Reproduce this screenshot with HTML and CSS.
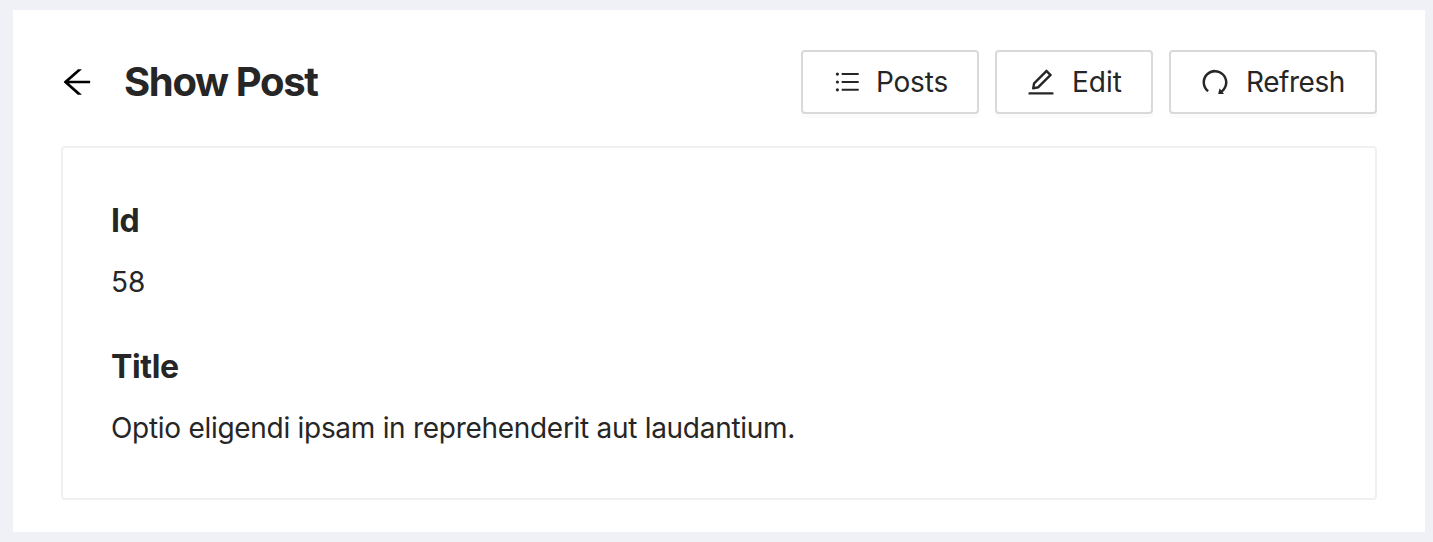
FILE: index.html
```html
<!DOCTYPE html>
<html lang="en">
<head>
<meta charset="utf-8">
<title>Show Post</title>
<link rel="stylesheet" href="styles.css">
</head>
<body>
<main class="page">
  <header class="page-header">
    <a class="back" aria-label="Back"><svg viewBox="64 64 896 896"><path d="M872 474H286.9l350.2-304c5.6-4.9 2.2-14-5.2-14h-88.5c-3.9 0-7.6 1.4-10.5 3.9L155 487.8a31.96 31.96 0 000 48.3L535.1 866c1.5 1.3 3.3 2 5.2 2h91.5c7.4 0 10.8-9.2 5.2-14L286.9 550H872c4.4 0 8-3.6 8-8v-60c0-4.4-3.6-8-8-8z"/></svg></a>
    <h1 class="page-title">Show Post</h1>
    <div class="actions">
      <button class="btn btn-posts"><svg viewBox="0 0 28 28"><path d="M8.7 5h17v2.1h-17zM8.7 12.9h17V15h-17zM8.7 20.7h17v2.1h-17z"/><circle cx="4.4" cy="6.1" r="1.6"/><circle cx="4.4" cy="14" r="1.6"/><circle cx="4.4" cy="21.8" r="1.6"/></svg><span>Posts</span></button>
      <button class="btn btn-edit"><svg viewBox="64 64 896 896"><path d="M257.7 752c2 0 4-.2 6-.5L431.9 722c2-.4 3.9-1.3 5.3-2.8l423.9-423.9a9.96 9.96 0 000-14.1L694.9 114.9c-1.9-1.9-4.4-2.9-7.1-2.9s-5.2 1-7.1 2.9L256.8 538.8c-1.5 1.5-2.4 3.3-2.8 5.3l-29.5 168.2a33.5 33.5 0 009.4 29.8c6.6 6.4 14.9 9.9 23.8 9.9zm67.4-174.4L687.8 215l73.3 73.3-362.7 362.6-88.9 15.7 15.6-89zM880 836H144c-17.7 0-32 14.3-32 32v36c0 4.4 3.6 8 8 8h784c4.4 0 8-3.6 8-8v-36c0-17.7-14.3-32-32-32z"/></svg><span>Edit</span></button>
      <button class="btn btn-refresh"><svg viewBox="64 64 896 896"><path d="M758.2 839.1C851.8 765.9 912 651.9 912 523.9 912 303 733.5 124.3 512.6 124 291.4 123.7 112 302.8 112 523.9c0 125.2 57.5 236.9 147.6 310.2 3.5 2.8 8.6 2.2 11.4-1.3l39.4-50.5c2.7-3.4 2.1-8.3-1.2-11.1-8.1-6.6-15.9-13.7-23.4-21.2a318.64 318.64 0 01-68.6-101.7C200.4 609 192 567.1 192 523.9s8.4-85.1 25.1-124.5c16.1-38.1 39.2-72.3 68.6-101.7 29.4-29.4 63.6-52.5 101.7-68.6C426.9 212.4 468.8 204 512 204s85.1 8.4 124.5 25.1c38.1 16.1 72.3 39.2 101.7 68.6 29.4 29.4 52.5 63.6 68.6 101.7 16.7 39.4 25.1 81.3 25.1 124.5s-8.4 85.1-25.1 124.5a318.64 318.64 0 01-68.6 101.7c-9.3 9.3-19.1 18-29.3 26L668.2 724a8 8 0 00-14.1 3l-39.6 162.2c-1.2 5 2.6 9.9 7.7 9.9l167 .8c6.7 0 10.5-7.7 6.3-12.9l-37.3-47.9z"/></svg><span>Refresh</span></button>
    </div>
  </header>
  <section class="card">
    <h5 class="label label-id">Id</h5>
    <span class="value value-id">58</span>
    <h5 class="label label-title">Title</h5>
    <span class="value value-title">Optio eligendi ipsam in reprehenderit aut laudantium.</span>
  </section>
</main>
</body>
</html>
```

FILE: styles.css
```css
* { box-sizing: border-box; }
body {
  margin: 0;
  height: 542px;
  padding: 10px 8px 10px 13px;
  background: #f0f1f6;
  color: #262626;
  font: 400 28px/44px Inter, "Liberation Sans", sans-serif;
}
.page {
  height: 522px;
  padding: 40px 48px 32px;
  background: #fff;
}
.page-header {
  display: flex;
  align-items: center;
  height: 64px;
}
.back, .back svg { display: block; width: 32px; height: 32px; }
.back { margin-right: 31px; fill: #000; }
.page-title {
  margin: 0;
  font-size: 40px;
  font-weight: 650;
  line-height: 64px;
  letter-spacing: -1.35px;
  white-space: nowrap;
}
.actions { display: flex; gap: 16px; margin-left: auto; }
.btn {
  display: flex;
  align-items: center;
  gap: 17px;
  height: 64px;
  padding: 0 0 0 30px;
  border: 2px solid #d9d9d9;
  border-radius: 4px;
  background: #fff;
  box-shadow: 0 4px 0 rgba(0, 0, 0, 0.016);
  color: inherit;
  font: inherit;
  white-space: nowrap;
}
.btn svg { flex: none; width: 28px; height: 28px; fill: currentColor; }
.btn-posts { width: 178px; gap: 15px; letter-spacing: -0.2px; }
.btn-edit { width: 158px; }
.btn-refresh { width: 208px; letter-spacing: -0.45px; }
.card {
  height: 354px;
  margin-top: 32px;
  padding: 49px 48px 47px;
  border: 2px solid #f0f0f0;
  border-radius: 4px;
}
.label {
  margin: 0 0 15px;
  font-size: 32px;
  font-weight: 650;
  line-height: 48px;
  letter-spacing: -0.4px;
}
.label-title { margin-top: 39px; }
.value { display: block; width: max-content; }
.value-title { letter-spacing: -0.29px; }
```
